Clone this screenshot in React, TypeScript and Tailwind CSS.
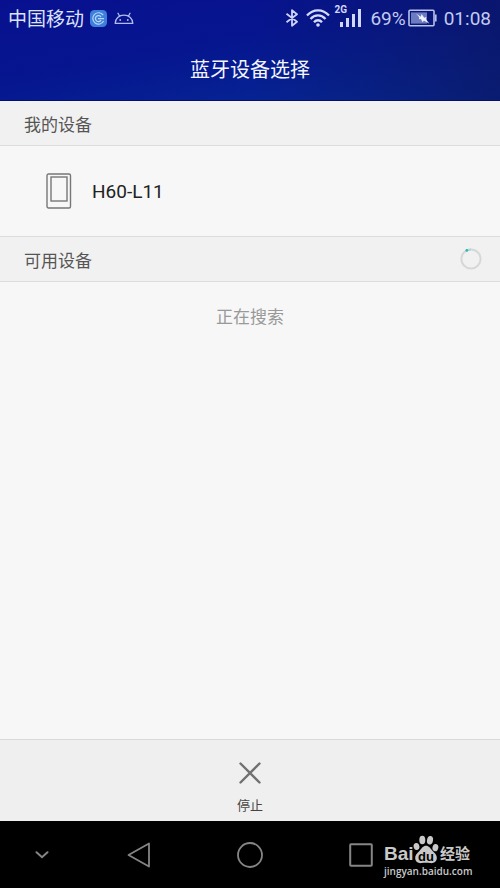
import React from 'react';

// Status bar icons
const CallBadge: React.FC = () => (
  <svg viewBox="0 0 17 17" className="size-[17px]" fill="none" aria-hidden="true">
    <rect width="17" height="17" rx="4.5" fill="#3f7fdc" />
    <path d="M13.2 5.2A5.7 5.7 0 1 0 13.6 11" stroke="#b5d8f7" strokeWidth="1.2" />
    <path d="M11 7A3 3 0 1 0 11 10.2M8 8.6h6" stroke="#b5d8f7" strokeWidth="1.3" />
  </svg>
);

const AndroidHead: React.FC = () => (
  <svg viewBox="0 0 20 13" className="h-[13px] w-5" fill="none" stroke="#b3bcf0" strokeWidth="1.3" aria-hidden="true">
    <path d="M1.2 11.4C1.2 6.5 5 3.2 10 3.2s8.8 3.3 8.8 8.2Z" strokeLinejoin="round" />
    <path d="M5.6 4.2 4 1.2M14.4 4.2 16 1.2" strokeLinecap="round" />
    <circle cx="6.2" cy="8" r=".9" fill="#b3bcf0" stroke="none" />
    <circle cx="13.8" cy="8" r=".9" fill="#b3bcf0" stroke="none" />
  </svg>
);

const BluetoothIcon: React.FC = () => (
  <svg viewBox="0 0 14 18" className="h-[18px] w-[14px]" fill="none" stroke="#ccd2fa" strokeWidth="1.8" aria-hidden="true">
    <path d="M1.500 4.800 12 12.800 7 16.800V1.200L12 5.200 1.500 13.200" strokeLinejoin="round" />
  </svg>
);

const WifiIcon: React.FC = () => (
  <svg viewBox="0 0 24 18" className="h-[18px] w-6" fill="none" stroke="#d5daff" strokeWidth="2.3" aria-hidden="true">
    <path d="M1 6.600C7-.4 17-.4 23 6.600M4.500 9.900c4.200-4.800 10.800-4.800 15 0M8 13.200c2.200-2.600 5.800-2.600 8 0" />
    <circle cx="12" cy="16" r="1.800" fill="#d5daff" stroke="none" />
  </svg>
);

const SignalIcon: React.FC = () => (
  <svg viewBox="0 0 21 18" className="h-[18px] w-[21px]" fill="#d2d7fc" aria-hidden="true">
    <rect x="0" y="13" width="3" height="5" />
    <rect x="6" y="9" width="3" height="9" />
    <rect x="12" y="5" width="3" height="13" />
    <rect x="18" y="0" width="3" height="18" />
  </svg>
);

const BatteryIcon: React.FC = () => (
  <svg viewBox="0 0 29 18" className="h-[18px] w-[29px]" fill="none" aria-hidden="true">
    <rect x="1" y="1.2" width="25" height="15.6" rx="1" stroke="#b9c1ee" strokeWidth="1.600" />
    <rect x="3" y="3.400" width="16" height="11.200" fill="#6a7bc0" />
    <path d="M27 5.500h1.600v7H27z" fill="#b9c1ee" />
    <path d="M8 4.500l4.800 3.300.8-2.800 2.600 3.800 2.200-.8-.5 2.200 3.600 4.600-5.600-3.300-1.200 1.800-1.800-3.400-1.900.4.300-2z" fill="#f1f2ff" />
  </svg>
);

const StatusBar: React.FC = () => (
  <div className="flex h-9 items-center justify-between pl-2 pr-[9px] text-[19px] leading-none text-[#c3caf2]">
    <div className="flex items-center">
      <span className="pt-[2px] text-[#dde2fa]">中国移动</span>
      <span className="ml-[6px]"><CallBadge /></span>
      <span className="ml-[7px]"><AndroidHead /></span>
    </div>
    <div className="flex items-center">
      <BluetoothIcon />
      <span className="ml-[7px]"><WifiIcon /></span>
      <div className="relative ml-[10px]">
        <SignalIcon />
        <span className="absolute -left-[6px] -top-1 text-[10px] font-bold leading-none text-[#d2d7fc]">2G</span>
      </div>
      <span className="ml-[9px] pt-px">69%</span>
      <span className="ml-[2px]"><BatteryIcon /></span>
      <time className="ml-[7px] pt-px">01:08</time>
    </div>
  </div>
);

interface SectionHeaderProps {
  title: string;
  loading?: boolean;
}

const SectionHeader: React.FC<SectionHeaderProps> = ({ title, loading }) => (
  <div className="flex h-[45px] items-center justify-between border-b border-[#dcdcdc] bg-[#f1f1f1] pl-6 pr-[18px]">
    <h2 className="pt-[3px] text-[17px] leading-6 text-[#555]">{title}</h2>
    {loading && (
      <svg viewBox="0 0 22 22" className="size-[22px]" fill="none" role="img" aria-label={title}>
        <circle cx="11" cy="11" r="9.600" stroke="#d6d8d8" strokeWidth="2" />
        <path d="M7.500 2.100A9.600 9.600 0 0 1 11 1.400" stroke="#a5dcdc" strokeWidth="2" />
        <circle cx="6.800" cy="2.400" r="1.400" fill="#35b5b8" />
      </svg>
    )}
  </div>
);

const DeviceRow: React.FC<{ name: string }> = ({ name }) => (
  <div className="flex h-[91px] items-center border-b border-[#dcdcdc] pl-[46px]">
    <svg viewBox="0 0 26 36" className="h-9 w-[26px]" fill="none" stroke="#777" aria-hidden="true">
      <rect x="1" y="1" width="23.5" height="34" rx="1.5" strokeWidth="1.4" />
      <rect x="5" y="4" width="16" height="24" strokeWidth="1.4" />
    </svg>
    <span className="ml-5 pt-[2px] text-[19px] text-[#222]">{name}</span>
  </div>
);

// Baidu Jingyan mark in the corner
const Watermark: React.FC = () => (
  <div className="absolute bottom-[10px] right-6 w-[92px] text-[#c9c9c9]">
    <div className="flex h-[28px] items-end">
      <span className="w-[29px] font-['Liberation_Sans',sans-serif] text-[19px] font-bold leading-5">Bai</span>
      <svg viewBox="0 0 26 29" className="h-[29px] w-[26px] shrink-0" fill="#c9c9c9" aria-hidden="true">
        <ellipse cx="3.500" cy="11.500" rx="2.900" ry="3.600" transform="rotate(-12 3.500 11.500)" />
        <ellipse cx="9.300" cy="5" rx="3" ry="4.300" />
        <ellipse cx="17" cy="5.300" rx="3" ry="4.300" transform="rotate(10 17 5.300)" />
        <ellipse cx="22.400" cy="12.600" rx="2.900" ry="3.700" transform="rotate(12 22.400 12.600)" />
        <path d="M13 10.800c3 0 4.200 2.600 6.400 4.900 2.800 2.700 4.800 4.600 4.400 7.900-.5 3.900-3.700 5-6.600 4.500-2.800-.5-5.600-.5-8.400 0-2.900.5-6.100-.6-6.600-4.500-.4-3.300 1.600-5.200 4.400-7.900C8.800 13.400 10 10.800 13 10.800Z" />
        <text x="13" y="26" textAnchor="middle" fill="#000" fontFamily="Liberation Sans, sans-serif" fontSize="13" fontWeight="700">du</text>
      </svg>
      <span className="shrink-0 pl-px text-[15px] font-bold leading-5">经验</span>
    </div>
    <div className="font-['Open_Sans',sans-serif] text-[10px] font-semibold leading-[14px]">jingyan.baidu.com</div>
  </div>
);

const NavBar: React.FC = () => (
  <nav className="relative grid h-[67px] grid-cols-[83fr_112fr_110fr_112fr_83fr] items-center justify-items-center bg-black text-[#858585]">
    <button type="button" aria-label="隐藏导航栏">
      <svg viewBox="0 0 14 8" className="h-2 w-[14px]" fill="none" stroke="currentColor" strokeWidth="2">
        <path d="m1.5 1.2 5.500 5 5.500-5" strokeLinecap="round" />
      </svg>
    </button>
    <button type="button" aria-label="返回">
      <svg viewBox="0 0 24 26" className="h-[26px] w-6" fill="none" stroke="currentColor" strokeWidth="1.8">
        <path d="M1.5 13 22 1.500v23Z" strokeLinejoin="round" />
      </svg>
    </button>
    <button type="button" aria-label="主页">
      <svg viewBox="0 0 26 26" className="size-[26px]" fill="none" stroke="currentColor" strokeWidth="1.8">
        <circle cx="13" cy="13" r="12" />
      </svg>
    </button>
    <button type="button" aria-label="最近任务">
      <svg viewBox="0 0 24 24" className="size-6" fill="none" stroke="currentColor" strokeWidth="2">
        <rect x="1.200" y="1.200" width="21.600" height="21.600" rx=".8" />
      </svg>
    </button>
    <Watermark />
  </nav>
);

const App: React.FC = () => (
  <div className="flex min-h-screen flex-col bg-[#f7f7f7] font-['Roboto','Noto_Sans_CJK_SC',sans-serif]">
    <header className="h-[101px] border-b border-[#06106b] bg-[linear-gradient(170deg,#08108f_0%,#06168f_45%,#062c96_100%)]">
      <div className="h-full bg-linear-to-r from-transparent from-50% to-[#0b1560]/70">
        <StatusBar />
        <h1 className="flex h-16 items-center justify-center pt-[3px] text-xl text-[#f2f5ff]">蓝牙设备选择</h1>
      </div>
    </header>

    <main className="grow">
      <section>
        <SectionHeader title="我的设备" />
        <DeviceRow name="H60-L11" />
      </section>
      <section>
        <SectionHeader title="可用设备" loading />
        <p className="pt-[23px] text-center text-[17px] leading-6 text-[#999]">正在搜索</p>
      </section>
    </main>

    <footer className="flex h-[82px] justify-center border-t border-[#d8d8d8] bg-[#efefef]">
      <button type="button" className="flex flex-col items-center px-6 pt-[22px] text-[13px] leading-5 text-[#444]">
        <svg viewBox="0 0 22 22" className="size-[22px]" fill="none" stroke="#707070" strokeWidth="2.400" aria-hidden="true">
          <path d="m1.5 1.500 19 19M20.500 1.500l-19 19" strokeLinecap="round" />
        </svg>
        <span className="mt-3">停止</span>
      </button>
    </footer>
    <NavBar />
  </div>
);

export default App;
